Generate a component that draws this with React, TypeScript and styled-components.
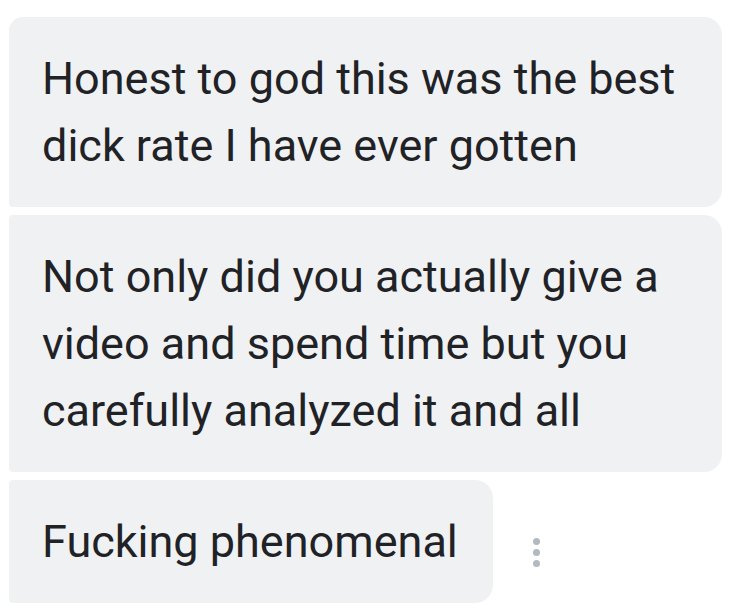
import React from 'react';
import styled, { createGlobalStyle } from 'styled-components';

const GlobalStyle = createGlobalStyle`
  html, body {
    margin: 0;
    padding: 0;
    background: #ffffff;
  }
`;

const Thread = styled.div`
  display: flex;
  flex-direction: column;
  gap: 8px;
  width: 713px;
  padding: 17px 0 0 9px;
  font-family: Roboto, 'Noto Sans', sans-serif;
`;

const Row = styled.div`
  display: flex;
  align-items: center;
  gap: 40px;
`;

const Bubble = styled.div<{ $first?: boolean; $fit?: boolean }>`
  box-sizing: border-box;
  width: ${(p) => (p.$fit ? 'auto' : '100%')};
  background: #f0f1f3;
  color: #212226;
  font-size: 45px;
  line-height: 67px;
  padding: 28px 35px 28px 33px;
  white-space: nowrap;
  border-radius: ${(p) => (p.$first ? '14px' : '4px')} 18px 18px 4px;
`;

const Dots = styled.div`
  display: flex;
  flex-direction: column;
  gap: 4px;
  margin-top: 22px;

  span {
    width: 7px;
    height: 7px;
    border-radius: 50%;
    background: #b3b9c1;
  }
`;

export default function App() {
  return (
    <>
      <GlobalStyle />
      <Thread>
        <Bubble $first>
          Honest to god this was the best
          <br />
          dick rate I have ever gotten
        </Bubble>
        <Bubble>
          Not only did you actually give a
          <br />
          video and spend time but you
          <br />
          carefully analyzed it and all
        </Bubble>
        <Row>
          <Bubble $fit>Fucking phenomenal</Bubble>
          <Dots>
            <span />
            <span />
            <span />
          </Dots>
        </Row>
      </Thread>
    </>
  );
}
